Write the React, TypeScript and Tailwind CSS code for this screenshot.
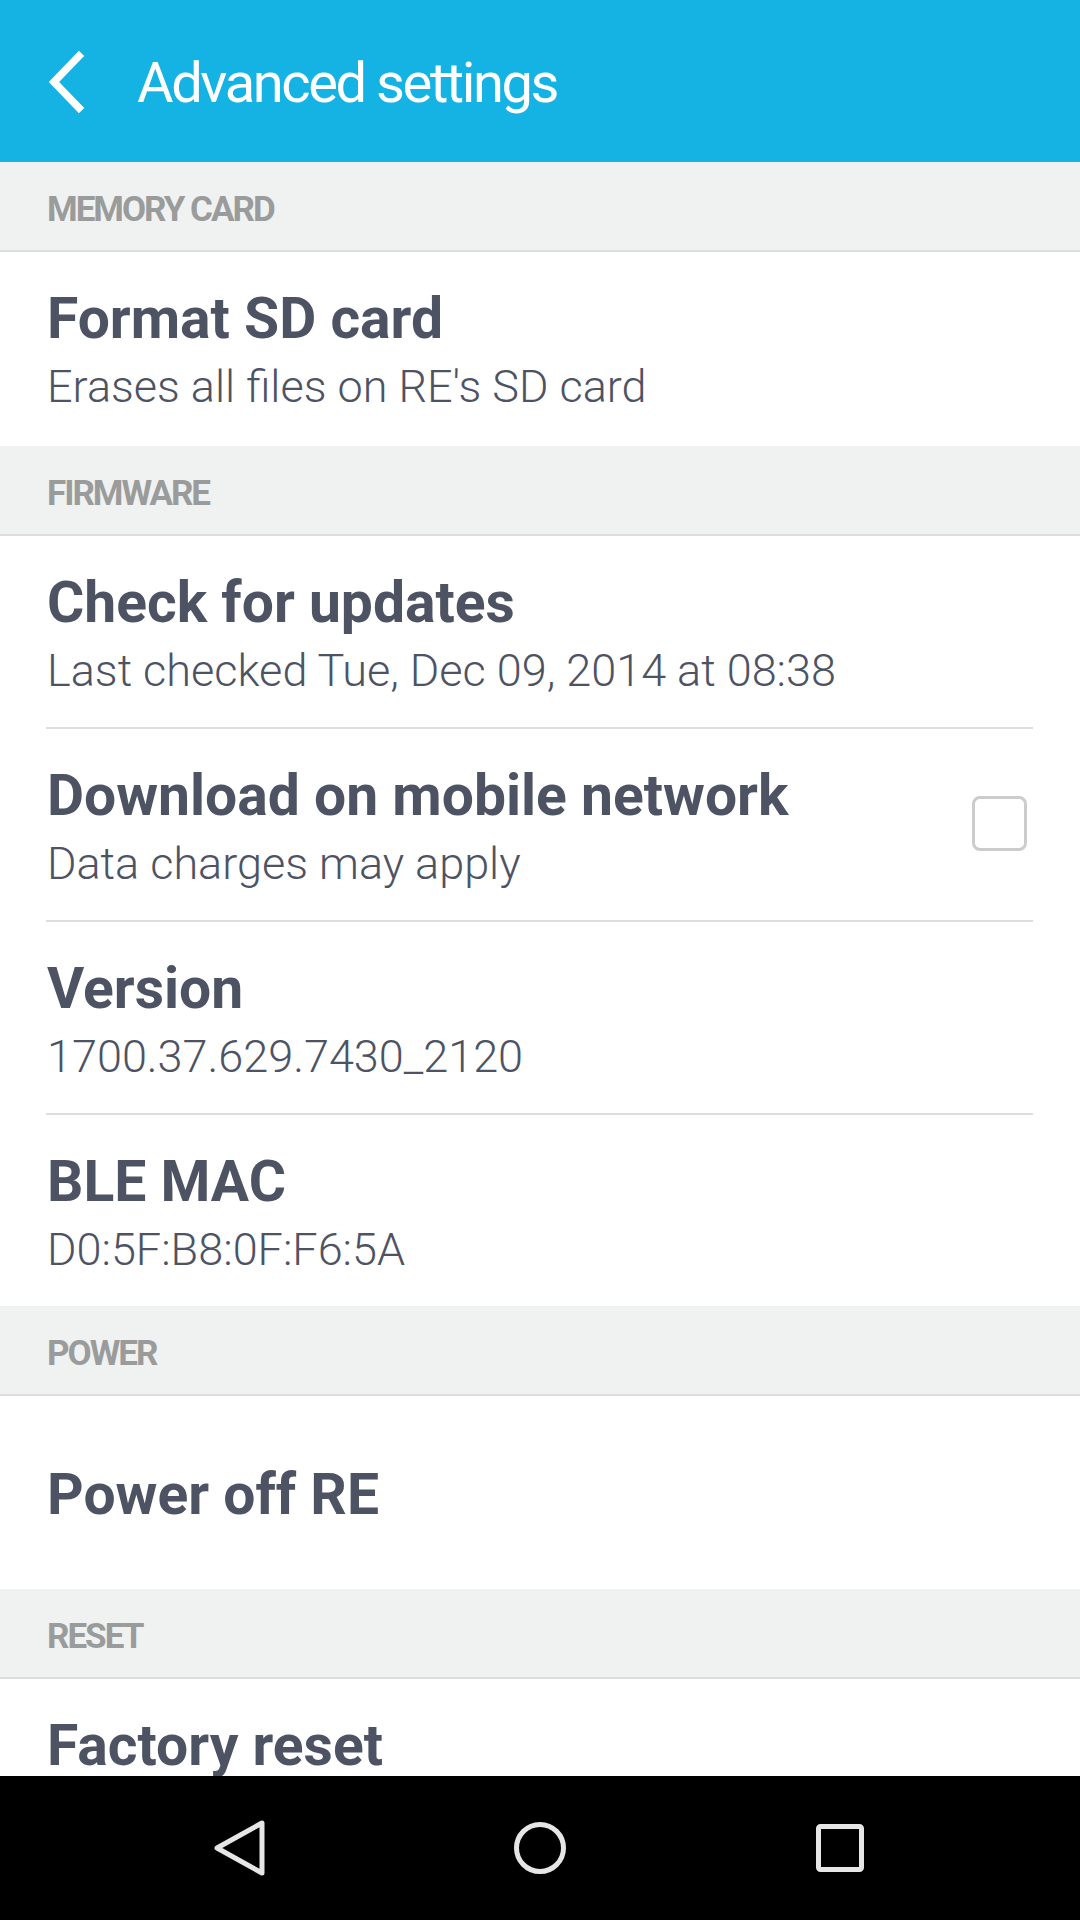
import React from "react";

const font = { fontFamily: "Roboto, 'Noto Sans', sans-serif" };

function Section({ label }: { label: string }) {
  return (
    <div className="h-[90px] shrink-0 bg-[#f0f1f1] border-b-2 border-[#dcdddd] flex items-center pt-[6px] pl-[47px]">
      <span className="text-[35px] font-bold text-[#9a9c9c] leading-none tracking-[-2px]">{label}</span>
    </div>
  );
}

function Item({
  title,
  sub,
  h,
  check,
  sep,
  top,
}: {
  title: string;
  sub?: string;
  h: string;
  check?: boolean;
  sep?: boolean;
  top?: boolean;
}) {
  const topAligned = !!sub || !!top;
  return (
    <div className={`${h} shrink-0 bg-white flex flex-col`}>
      <div className={`flex-1 flex pl-[47px] pr-[53px] ${topAligned ? "items-start pt-[35px]" : "items-center pt-[5px]"}`}>
        <div className="flex-1 flex flex-col">
          <div className="text-[57px] font-bold leading-[64px] text-[#4e5364]">{title}</div>
          {sub && (
            <div className="text-[45px] font-light leading-[64px] mt-[4px] text-[#4e5364]">{sub}</div>
          )}
        </div>
        {check && (
          <div className="w-[55px] h-[55px] rounded-[8px] border-[3px] border-[#caccce] mt-[32px]" />
        )}
      </div>
      {sep && <div className="h-[2px] ml-[46px] mr-[47px] bg-[#dcdddd] shrink-0" />}
    </div>
  );
}

export default function App() {
  return (
    <div className="w-[1080px] h-[1920px] flex flex-col overflow-hidden bg-white" style={font}>
      <div className="h-[162px] shrink-0 bg-[#15b3e4] flex items-center">
        <svg width="50" height="70" viewBox="0 0 50 70" className="ml-[42px] mt-[2px]">
          <path d="M37 9 L12 35 L37 61" fill="none" stroke="#ffffff" strokeWidth="7.5" strokeLinecap="square" />
        </svg>
        <span className="ml-[45px] mt-[4px] text-[56px] font-normal text-white leading-none tracking-[-2.4px]">
          Advanced settings
        </span>
      </div>
      <div className="flex-1 flex flex-col overflow-hidden">
        <Section label="MEMORY CARD" />
        <Item h="h-[194px]" title="Format SD card" sub="Erases all files on RE's SD card" />
        <Section label="FIRMWARE" />
        <Item h="h-[193px]" title="Check for updates" sub="Last checked Tue, Dec 09, 2014 at 08:38" sep />
        <Item h="h-[193px]" title="Download on mobile network" sub="Data charges may apply" check sep />
        <Item h="h-[193px]" title="Version" sub="1700.37.629.7430_2120" sep />
        <Item h="h-[191px]" title="BLE MAC" sub="D0:5F:B8:0F:F6:5A" />
        <Section label="POWER" />
        <Item h="h-[193px]" title="Power off RE" />
        <Section label="RESET" />
        <Item h="h-[193px]" title="Factory reset" top />
      </div>
      <div className="h-[144px] shrink-0 bg-black flex items-center px-[90px]">
        <div className="flex-1 flex justify-center">
          <svg width="60" height="60" viewBox="0 0 60 60">
            <path d="M52 5 L52 55 L7 30 Z" fill="none" stroke="#e6e6e6" strokeWidth="5" strokeLinejoin="round" />
          </svg>
        </div>
        <div className="flex-1 flex justify-center">
          <svg width="60" height="60" viewBox="0 0 60 60">
            <circle cx="30" cy="30" r="23.5" fill="none" stroke="#e6e6e6" strokeWidth="5" />
          </svg>
        </div>
        <div className="flex-1 flex justify-center">
          <svg width="60" height="60" viewBox="0 0 60 60">
            <rect x="8.5" y="8.5" width="43" height="43" rx="2" fill="none" stroke="#e6e6e6" strokeWidth="5" />
          </svg>
        </div>
      </div>
    </div>
  );
}
